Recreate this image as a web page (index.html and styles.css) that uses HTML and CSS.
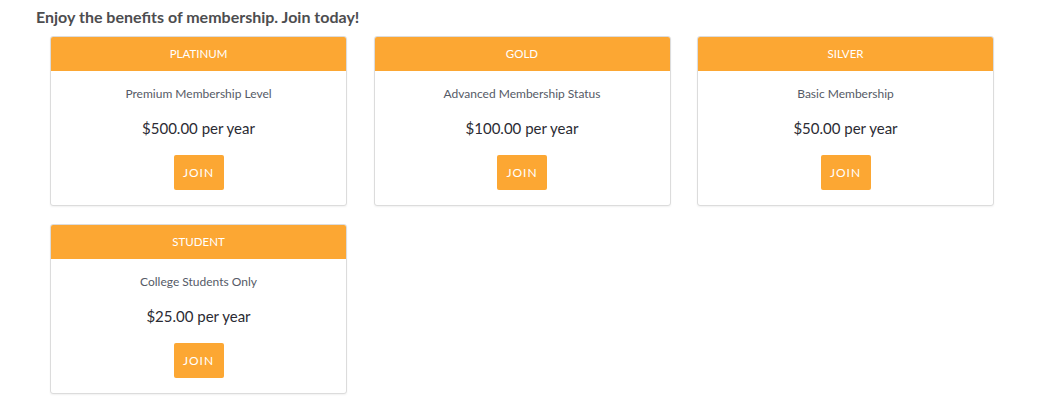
FILE: index.html
```html
<!DOCTYPE html>
<html>
<head>
    <meta charset="utf-8"/>
    <title>Membership</title>
    <link rel="stylesheet" href="styles.css">
</head>
<body>
<div class="page">
    <h3 class="intro">Enjoy the benefits of membership. Join today!</h3>
    <div class="levels">
        <div class="level">
            <div class="levelHead">PLATINUM</div>
            <div class="levelBody">
                <p class="levelDesc">Premium Membership Level</p>
                <p class="levelPrice">$500.00 per year</p>
                <button class="joinBtn">JOIN</button>
            </div>
        </div>
        <div class="level">
            <div class="levelHead">GOLD</div>
            <div class="levelBody">
                <p class="levelDesc">Advanced Membership Status</p>
                <p class="levelPrice">$100.00 per year</p>
                <button class="joinBtn">JOIN</button>
            </div>
        </div>
        <div class="level">
            <div class="levelHead">SILVER</div>
            <div class="levelBody">
                <p class="levelDesc">Basic Membership</p>
                <p class="levelPrice">$50.00 per year</p>
                <button class="joinBtn">JOIN</button>
            </div>
        </div>
        <div class="level">
            <div class="levelHead">STUDENT</div>
            <div class="levelBody">
                <p class="levelDesc">College Students Only</p>
                <p class="levelPrice">$25.00 per year</p>
                <button class="joinBtn">JOIN</button>
            </div>
        </div>
    </div>
</div>
</body>
</html>
```

FILE: styles.css
```css
body {
    margin: 0;
    background: #fff;
    font-family: Lato, "Liberation Sans", sans-serif;
    color: #333;
}

.page {
    padding: 7px 36px;
}

.intro {
    margin: 0 0 9px 0;
    font-size: 16px;
    line-height: 20px;
    font-weight: bold;
    color: #4d4d4f;
}

.levels {
    display: grid;
    grid-template-columns: repeat(3, 297px);
    column-gap: 26.5px;
    row-gap: 18px;
    padding-left: 14px;
}

.level {
    border: 1px solid #dcdcdc;
    border-radius: 3px;
    overflow: hidden;
    box-shadow: 0 1px 2px rgba(0, 0, 0, 0.06);
    background: #fff;
}

.levelHead {
    background: #fca733;
    color: #fff;
    height: 34px;
    line-height: 34px;
    text-align: center;
    font-size: 11.5px;
}

.levelBody {
    text-align: center;
    padding: 14px 0 15px 0;
}

.levelDesc {
    margin: 0;
    font-size: 12px;
    line-height: 18px;
    color: #555a66;
}

.levelPrice {
    margin: 13px 0 0 0;
    font-size: 15px;
    line-height: 24px;
    color: #2b2b33;
}

.joinBtn {
    margin-top: 15px;
    width: 50px;
    height: 35px;
    border: 0;
    border-radius: 2px;
    background: #fca733;
    color: #fff;
    font-family: inherit;
    font-size: 12px;
    letter-spacing: 1px;
    padding: 0;
}
```
